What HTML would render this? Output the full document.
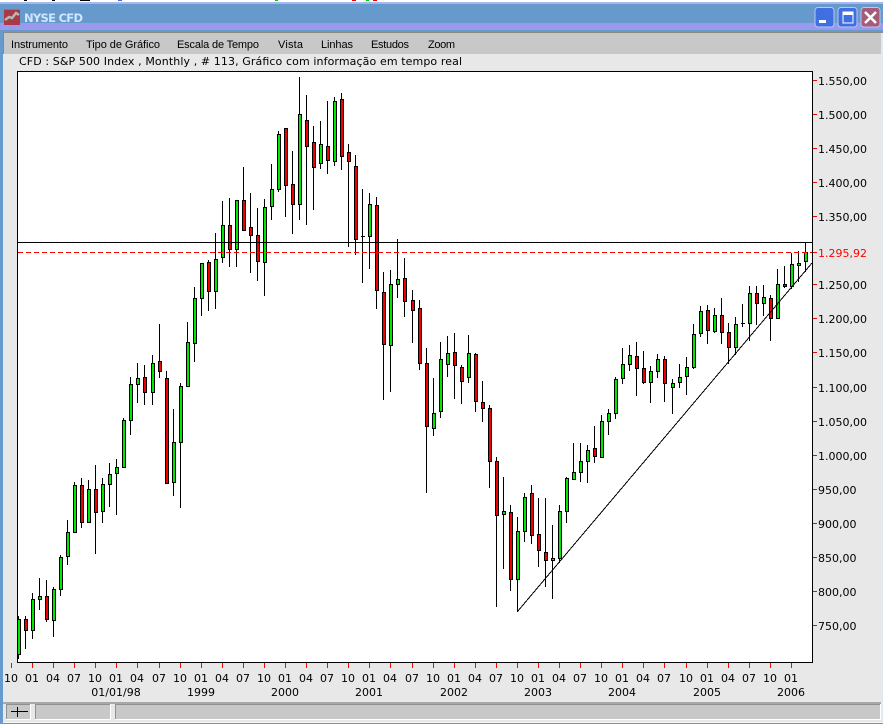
<!DOCTYPE html>
<html><head><meta charset="utf-8"><title>NYSE CFD</title>
<style>
html,body{margin:0;padding:0;background:#e8e8e8;overflow:hidden}
svg{display:block}
.m{font-family:"Liberation Sans",sans-serif;font-size:11px;fill:#000}
.d{font-family:"DejaVu Sans",sans-serif;font-size:11px;fill:#000}
</style></head><body>
<svg xmlns="http://www.w3.org/2000/svg" width="883" height="724" viewBox="0 0 883 724">
<rect width="883" height="724" fill="#e8e8e8"/>
<g shape-rendering="crispEdges">
<rect width="883" height="2" fill="#fff"/>
<rect x="24" y="0" width="3" height="1" fill="#000"/><rect x="52" y="0" width="3" height="1" fill="#000"/><rect x="80" y="0" width="10" height="1" fill="#000"/><rect x="118" y="0" width="4" height="1" fill="#4a6fd0"/><rect x="275" y="0" width="3" height="1" fill="#0c0"/><rect x="352" y="0" width="4" height="1" fill="#e00"/><rect x="366" y="0" width="3" height="1" fill="#0c0"/><rect x="373" y="0" width="4" height="1" fill="#e00"/>
<rect y="2" width="883" height="2" fill="#a9b8ea"/>
<rect y="4" width="883" height="20" fill="#6699cc"/>
<rect y="23" width="883" height="7" fill="#9999ee"/>
<rect y="30" width="883" height="2" fill="#6699cc"/>
<rect y="32" width="883" height="1" fill="#8a8a80"/>
<rect y="33" x="4" width="877" height="21" fill="#c8c8c8"/>
<rect x="0" y="30" width="3" height="694" fill="#6699cc"/>
<rect x="3" y="32" width="1" height="22" fill="#8a8a80"/>
<rect x="881" y="33" width="2" height="691" fill="#dfe9f5"/>
<rect y="702" x="3" width="878" height="2" fill="#a8a8a8"/>
<rect y="704" x="3" width="878" height="18" fill="#e8e8e8"/>
<rect y="722" x="3" width="880" height="1" fill="#f4f6fa"/>
<rect y="723" width="883" height="1" fill="#6699cc"/>
<rect x="6" y="704" width="25" height="16" fill="#fff"/><rect x="6" y="704" width="24" height="15" fill="#909090"/><rect x="7" y="705" width="23" height="14" fill="#c8c8c8"/>
<rect x="35" y="704" width="76" height="16" fill="#fff"/><rect x="35" y="704" width="75" height="15" fill="#909090"/><rect x="36" y="705" width="74" height="14" fill="#c8c8c8"/>
<rect x="115" y="704" width="766" height="16" fill="#fff"/><rect x="115" y="704" width="765" height="15" fill="#909090"/><rect x="116" y="705" width="764" height="14" fill="#c8c8c8"/>
<rect x="11" y="711" width="17" height="1" fill="#000"/><rect x="17" y="707" width="1" height="10" fill="#000"/>
<rect x="4" y="9" width="16" height="16" fill="#a83a48"/><rect x="4" y="9" width="16" height="1" fill="#c06070"/>
<rect x="815" y="7.5" width="19" height="19.5" rx="3" fill="#3f6fe0" stroke="#b8c8f0" shape-rendering="auto"/>
<rect x="838" y="7.5" width="19" height="19.5" rx="3" fill="#3f6fe0" stroke="#b8c8f0" shape-rendering="auto"/>
<rect x="861" y="7.5" width="19" height="19.5" rx="3" fill="#a85a78" stroke="#b8c8f0" shape-rendering="auto"/>
<rect x="819" y="20" width="7" height="3" fill="#fff"/>
<rect x="843" y="12" width="10" height="11" fill="none" stroke="#fff"/><rect x="843" y="12" width="10" height="3" fill="#fff"/>
</g>
<path d="M5 20l4-3 3 1 4-5 3 2" fill="none" stroke="#b8b8b0" stroke-width="2.5"/>
<path d="M865 12l11 11M876 12l-11 11" stroke="#fff" stroke-width="2.6" fill="none"/>
<text x="24" y="22" textLength="59" style="font-family:'DejaVu Sans',sans-serif;font-size:11.5px;font-weight:bold;fill:#cfe6ff">NYSE CFD</text>
<text class="m" x="11" y="48" textLength="57">Instrumento</text>
<text class="m" x="86" y="48" textLength="74">Tipo de Gráfico</text>
<text class="m" x="177" y="48" textLength="82">Escala de Tempo</text>
<text class="m" x="278" y="48" textLength="25">Vista</text>
<text class="m" x="321" y="48" textLength="32">Linhas</text>
<text class="m" x="371" y="48" textLength="38">Estudos</text>
<text class="m" x="428" y="48" textLength="27">Zoom</text>
<text class="d" x="19" y="65" textLength="443">CFD : S&amp;P 500 Index , Monthly , # 113, Gráfico com informação em tempo real</text>
<g shape-rendering="crispEdges">
<rect x="17.5" y="71.5" width="795" height="591" fill="#fff" stroke="#000"/>
<path fill="none" stroke="#000" d="M18.5 616V659M25.5 616V649M32.5 593V639M39.5 578V610M46.5 580V622M53.5 587V637M60.5 555V596M67.5 520V565M74.5 482V533M81.5 478V528M88.5 480V523M95.5 465V554M102.5 478V523M109.5 463V507M116.5 459V515M123.5 418V468M130.5 377V435M137.5 363V403M144.5 365V405M152.5 355V405M159.5 324V378M166.5 371V484M173.5 409V496M180.5 383V508M187.5 322V387M194.5 287V362M201.5 263V316M208.5 260V311M215.5 233V309M222.5 201V263M229.5 198V267M236.5 200V267M243.5 167V231M250.5 193V273M257.5 208V281M264.5 199V296M271.5 164V220M278.5 131V192M285.5 128V217M292.5 151V234M299.5 77V220M306.5 95V225M313.5 126V210M320.5 121V169M327.5 101V174M334.5 97V166M341.5 93V170M348.5 144V247M355.5 155V255M362.5 189V283M369.5 193V269M376.5 197V309M383.5 272V400M390.5 270V392M397.5 239V298M404.5 258V317M412.5 290V343M419.5 300V370M426.5 348V493M433.5 378V436M440.5 342V418M447.5 336V377M454.5 333V399M461.5 365V404M468.5 335V383M475.5 353V412M482.5 381V422M489.5 405V488M496.5 457V607M503.5 477V569M510.5 505V591M517.5 517V612M524.5 493V542M531.5 485V544M538.5 498V567M545.5 498V587M552.5 525V599M559.5 505V563M566.5 477V523M573.5 443V480M580.5 443V482M587.5 445V483M594.5 426V463M601.5 415V458M608.5 409V435M615.5 377V419M622.5 348V384M629.5 345V371M636.5 342V396M643.5 351V384M650.5 366V403M657.5 354V378M664.5 356V402M672.5 379V414M679.5 364V388M686.5 357V395M693.5 324V369M700.5 306V337M707.5 305V344M714.5 308V333M721.5 298V344M728.5 323V364M735.5 317V355M742.5 304V327M749.5 286V341M756.5 286V325M763.5 285V316M770.5 295V341M777.5 269V319M784.5 266V288M791.5 253V289M798.5 251V282M805.5 242V272"/>
<path fill="#00e800" stroke="#000" d="M17.5 619.5h3V654.5h-3zM31.5 599.5h3V630.5h-3zM38.5 596.5h3V599.5h-3zM52.5 589.5h3V620.5h-3zM59.5 557.5h3V589.5h-3zM66.5 532.5h3V556.5h-3zM73.5 485.5h3V532.5h-3zM87.5 489.5h3V522.5h-3zM101.5 484.5h3V511.5h-3zM108.5 474.5h3V484.5h-3zM115.5 467.5h3V473.5h-3zM122.5 420.5h3V467.5h-3zM129.5 384.5h3V420.5h-3zM136.5 378.5h3V384.5h-3zM151.5 363.5h3V392.5h-3zM172.5 442.5h3V482.5h-3zM179.5 386.5h3V442.5h-3zM186.5 342.5h3V386.5h-3zM193.5 298.5h3V343.5h-3zM200.5 263.5h3V298.5h-3zM214.5 259.5h3V291.5h-3zM221.5 225.5h3V257.5h-3zM235.5 200.5h3V249.5h-3zM263.5 207.5h3V262.5h-3zM270.5 189.5h3V206.5h-3zM277.5 134.5h3V189.5h-3zM298.5 114.5h3V204.5h-3zM319.5 144.5h3V163.5h-3zM333.5 101.5h3V161.5h-3zM368.5 204.5h3V236.5h-3zM389.5 284.5h3V345.5h-3zM396.5 279.5h3V284.5h-3zM432.5 413.5h3V428.5h-3zM439.5 359.5h3V411.5h-3zM446.5 353.5h3V364.5h-3zM467.5 353.5h3V377.5h-3zM502.5 511.5h3V514.5h-3zM516.5 531.5h3V579.5h-3zM523.5 497.5h3V531.5h-3zM551.5 558.5h3V560.5h-3zM558.5 511.5h3V558.5h-3zM565.5 478.5h3V511.5h-3zM572.5 472.5h3V479.5h-3zM579.5 461.5h3V472.5h-3zM586.5 450.5h3V461.5h-3zM600.5 421.5h3V457.5h-3zM607.5 413.5h3V421.5h-3zM614.5 379.5h3V413.5h-3zM621.5 364.5h3V378.5h-3zM628.5 355.5h3V364.5h-3zM649.5 371.5h3V382.5h-3zM656.5 359.5h3V371.5h-3zM671.5 383.5h3V387.5h-3zM678.5 377.5h3V382.5h-3zM685.5 367.5h3V376.5h-3zM692.5 334.5h3V367.5h-3zM699.5 311.5h3V333.5h-3zM713.5 315.5h3V331.5h-3zM734.5 324.5h3V347.5h-3zM748.5 293.5h3V323.5h-3zM762.5 297.5h3V303.5h-3zM776.5 284.5h3V318.5h-3zM790.5 264.5h3V286.5h-3zM797.5 263.5h3V265.5h-3zM804.5 252.5h3V261.5h-3z"/>
<path fill="#f00000" stroke="#000" d="M24.5 619.5h3V630.5h-3zM45.5 596.5h3V619.5h-3zM80.5 485.5h3V522.5h-3zM94.5 489.5h3V512.5h-3zM143.5 377.5h3V392.5h-3zM158.5 361.5h3V371.5h-3zM165.5 378.5h3V483.5h-3zM207.5 262.5h3V291.5h-3zM228.5 225.5h3V249.5h-3zM242.5 200.5h3V230.5h-3zM249.5 227.5h3V235.5h-3zM256.5 235.5h3V261.5h-3zM284.5 128.5h3V185.5h-3zM291.5 184.5h3V204.5h-3zM305.5 120.5h3V146.5h-3zM312.5 142.5h3V167.5h-3zM326.5 146.5h3V160.5h-3zM340.5 99.5h3V156.5h-3zM347.5 152.5h3V161.5h-3zM354.5 166.5h3V239.5h-3zM375.5 205.5h3V290.5h-3zM382.5 292.5h3V344.5h-3zM403.5 278.5h3V301.5h-3zM411.5 300.5h3V310.5h-3zM418.5 308.5h3V363.5h-3zM425.5 363.5h3V426.5h-3zM453.5 352.5h3V365.5h-3zM460.5 367.5h3V381.5h-3zM474.5 354.5h3V401.5h-3zM481.5 402.5h3V408.5h-3zM488.5 408.5h3V461.5h-3zM495.5 461.5h3V515.5h-3zM509.5 512.5h3V579.5h-3zM530.5 493.5h3V535.5h-3zM537.5 534.5h3V550.5h-3zM544.5 552.5h3V560.5h-3zM593.5 448.5h3V456.5h-3zM635.5 356.5h3V368.5h-3zM642.5 368.5h3V382.5h-3zM663.5 359.5h3V383.5h-3zM706.5 310.5h3V330.5h-3zM720.5 315.5h3V332.5h-3zM727.5 332.5h3V347.5h-3zM755.5 293.5h3V303.5h-3zM769.5 298.5h3V318.5h-3zM783.5 284.5h3V286.5h-3z"/>
<path stroke="#000" fill="none" d="M361 236.5h4M741 323.5h4"/>
<path stroke="#000" fill="none" d="M517.5 611.5L812 263"/>
<path stroke="#000" fill="none" d="M18 242.5H812"/>
<path stroke="#f00" fill="none" stroke-dasharray="5 3" d="M18 252.5H812"/>
<path stroke="#f00" fill="none" d="M813 80.5h4M813 114.5h4M813 148.5h4M813 182.5h4M813 216.5h4M813 252.5h4M813 284.5h4M813 318.5h4M813 352.5h4M813 387.5h4M813 421.5h4M813 455.5h4M813 489.5h4M813 523.5h4M813 557.5h4M813 591.5h4M813 625.5h4"/>
<path stroke="#f00" fill="none" d="M11.5 663v5M32.5 663v5M53.5 663v5M74.5 663v5M95.5 663v5M116.5 663v5M137.5 663v5M159.5 663v5M180.5 663v5M201.5 663v5M222.5 663v5M243.5 663v5M264.5 663v5M285.5 663v5M306.5 663v5M327.5 663v5M348.5 663v5M369.5 663v5M390.5 663v5M412.5 663v5M433.5 663v5M454.5 663v5M475.5 663v5M496.5 663v5M517.5 663v5M538.5 663v5M559.5 663v5M580.5 663v5M601.5 663v5M622.5 663v5M643.5 663v5M664.5 663v5M686.5 663v5M707.5 663v5M728.5 663v5M749.5 663v5M770.5 663v5M791.5 663v5"/>
</g>
<g class="d">
<text class="d" x="818" y="85">1.550,00</text>
<text class="d" x="818" y="119">1.500,00</text>
<text class="d" x="818" y="153">1.450,00</text>
<text class="d" x="818" y="187">1.400,00</text>
<text class="d" x="818" y="221">1.350,00</text>
<text class="d" x="818" y="257" style="fill:#f00">1.295,92</text>
<text class="d" x="818" y="289">1.250,00</text>
<text class="d" x="818" y="323">1.200,00</text>
<text class="d" x="818" y="357">1.150,00</text>
<text class="d" x="818" y="392">1.100,00</text>
<text class="d" x="818" y="426">1.050,00</text>
<text class="d" x="818" y="460">1.000,00</text>
<text class="d" x="818" y="494">950,00</text>
<text class="d" x="818" y="528">900,00</text>
<text class="d" x="818" y="562">850,00</text>
<text class="d" x="818" y="596">800,00</text>
<text class="d" x="818" y="630">750,00</text>
</g>
<g text-anchor="middle">
<text class="d" x="11" y="682">10</text><text class="d" x="32" y="682">01</text><text class="d" x="53" y="682">04</text><text class="d" x="74" y="682">07</text>
<text class="d" x="95" y="682">10</text><text class="d" x="116" y="682">01</text><text class="d" x="137" y="682">04</text><text class="d" x="159" y="682">07</text>
<text class="d" x="180" y="682">10</text><text class="d" x="201" y="682">01</text><text class="d" x="222" y="682">04</text><text class="d" x="243" y="682">07</text>
<text class="d" x="264" y="682">10</text><text class="d" x="285" y="682">01</text><text class="d" x="306" y="682">04</text><text class="d" x="327" y="682">07</text>
<text class="d" x="348" y="682">10</text><text class="d" x="369" y="682">01</text><text class="d" x="390" y="682">04</text><text class="d" x="412" y="682">07</text>
<text class="d" x="433" y="682">10</text><text class="d" x="454" y="682">01</text><text class="d" x="475" y="682">04</text><text class="d" x="496" y="682">07</text>
<text class="d" x="517" y="682">10</text><text class="d" x="538" y="682">01</text><text class="d" x="559" y="682">04</text><text class="d" x="580" y="682">07</text>
<text class="d" x="601" y="682">10</text><text class="d" x="622" y="682">01</text><text class="d" x="643" y="682">04</text><text class="d" x="664" y="682">07</text>
<text class="d" x="686" y="682">10</text><text class="d" x="707" y="682">01</text><text class="d" x="728" y="682">04</text><text class="d" x="749" y="682">07</text>
<text class="d" x="770" y="682">10</text><text class="d" x="791" y="682">01</text>
<text class="d" x="116" y="696">01/01/98</text><text class="d" x="201" y="696">1999</text><text class="d" x="285" y="696">2000</text><text class="d" x="369" y="696">2001</text><text class="d" x="454" y="696">2002</text><text class="d" x="538" y="696">2003</text><text class="d" x="622" y="696">2004</text><text class="d" x="707" y="696">2005</text><text class="d" x="791" y="696">2006</text>
</g>
</svg>
</body></html>
